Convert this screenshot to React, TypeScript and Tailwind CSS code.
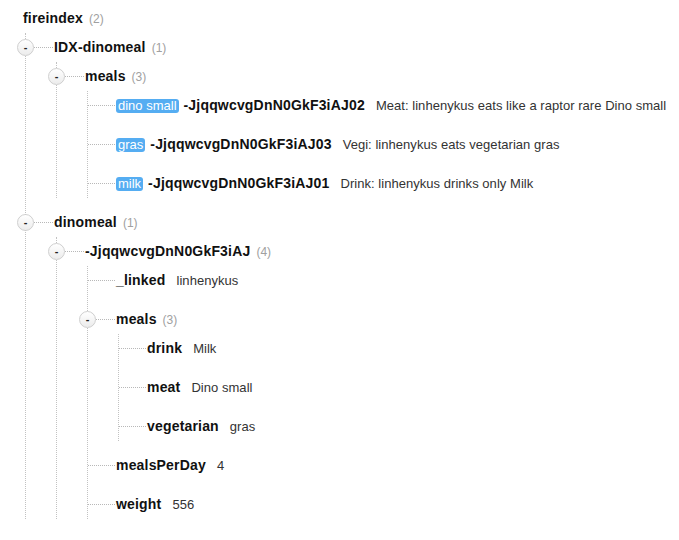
import React from "react";

type TNode = {
  key: string;
  count?: number;
  badge?: string;
  value?: string;
  children?: TNode[];
};

const tree: TNode = {
  key: "fireindex",
  count: 2,
  children: [
    {
      key: "IDX-dinomeal",
      count: 1,
      children: [
        {
          key: "meals",
          count: 3,
          children: [
            {
              key: "-JjqqwcvgDnN0GkF3iAJ02",
              badge: "dino small",
              value: "Meat: linhenykus eats like a raptor rare Dino small",
            },
            {
              key: "-JjqqwcvgDnN0GkF3iAJ03",
              badge: "gras",
              value: "Vegi: linhenykus eats vegetarian gras",
            },
            {
              key: "-JjqqwcvgDnN0GkF3iAJ01",
              badge: "milk",
              value: "Drink: linhenykus drinks only Milk",
            },
          ],
        },
      ],
    },
    {
      key: "dinomeal",
      count: 1,
      children: [
        {
          key: "-JjqqwcvgDnN0GkF3iAJ",
          count: 4,
          children: [
            { key: "_linked", value: "linhenykus" },
            {
              key: "meals",
              count: 3,
              children: [
                { key: "drink", value: "Milk" },
                { key: "meat", value: "Dino small" },
                { key: "vegetarian", value: "gras" },
              ],
            },
            { key: "mealsPerDay", value: "4" },
            { key: "weight", value: "556" },
          ],
        },
      ],
    },
  ],
};

function Label({ node }: { node: TNode }) {
  return (
    <>
      {node.badge && (
        <span className="mr-[5px] inline-flex h-[14px] items-center rounded-[3px] bg-[#55adf2] px-[2px] text-[13px] leading-none text-white">
          {node.badge}
        </span>
      )}
      <span className="text-[14px] font-bold tracking-[0.18px] text-[#111]">{node.key}</span>
      {node.count !== undefined && (
        <span className="ml-[6px] text-[12px] text-[#a0a0a0]">({node.count})</span>
      )}
      {node.value !== undefined && (
        <span className="ml-[11px] text-[13px] tracking-[0.04px] text-[#333]">{node.value}</span>
      )}
    </>
  );
}

function Children({ nodes }: { nodes: TNode[] }) {
  return (
    <ul className="flex flex-col gap-[10px] border-l border-dotted border-[#c2c2c2]">
      {nodes.map((n, i) => (
        <Item key={i} node={n} />
      ))}
    </ul>
  );
}

function Item({ node }: { node: TNode }) {
  const hasChildren = !!node.children && node.children.length > 0;
  return (
    <li className="relative">
      <div className="relative flex h-[29px] items-center whitespace-nowrap pl-[28px]">
        <span className="absolute left-0 top-[14px] w-[27px] border-t border-dotted border-[#b8b8b8]" />
        {hasChildren && (
          <span className="absolute left-[-9px] top-[6px] flex h-[17px] w-[17px] items-center justify-center rounded-full border border-[#cfcfcf] bg-gradient-to-b from-white to-[#ececec] text-[11px] font-bold leading-none text-[#222]">
            -
          </span>
        )}
        <Label node={node} />
      </div>
      {hasChildren && (
        <div className="ml-[30px]">
          <Children nodes={node.children!} />
        </div>
      )}
    </li>
  );
}

export default function App() {
  return (
    <div
      className="min-h-[540px] w-[679px] bg-white pl-[23px] pt-[4px]"
      style={{ fontFamily: '"Liberation Sans", Arial, sans-serif' }}
    >
      <div className="flex h-[29px] items-center whitespace-nowrap">
        <Label node={tree} />
      </div>
      <div className="ml-[2px]">
        <Children nodes={tree.children!} />
      </div>
    </div>
  );
}
